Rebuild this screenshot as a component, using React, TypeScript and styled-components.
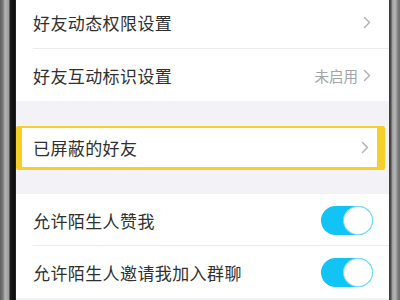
import * as React from 'react';
import styled, { createGlobalStyle } from 'styled-components';

const GlobalStyle = createGlobalStyle`
  html, body {
    margin: 0;
    padding: 0;
    width: 400px;
    height: 300px;
    overflow: hidden;
    background: #fff;
  }
`;

const Phone = styled.div`
  display: flex;
  width: 400px;
  height: 300px;
  overflow: hidden;
`;

const LeftBezel = styled.div`
  flex: 0 0 16px;
  background: linear-gradient(
    to right,
    #5e5e5e 0,
    #7a7a7a 3px,
    #b4b4b4 5px,
    #9a9a9a 9px,
    #1a1a1a 10px,
    #0c0c0c 15px,
    #3a3a3a 16px
  );
`;

const RightBezel = styled.div`
  flex: 0 0 11px;
  background: linear-gradient(
    to right,
    #3c3c3c 0,
    #4a4a4a 2px,
    #9c9c9c 3px,
    #b8b8b8 6px,
    #7d7d7d 9px,
    #6a6a6a 11px
  );
`;

const Screen = styled.div`
  flex: 1;
  display: flex;
  flex-direction: column;
  background: #f3f3f7;
  font-family: 'Noto Sans CJK SC', 'Noto Sans', sans-serif;
  color: #333;
`;

const Group = styled.div<{ $gap?: number }>`
  display: flex;
  flex-direction: column;
  background: #fff;
  margin-top: ${(p) => p.$gap ?? 0}px;
`;

const Row = styled.div<{ $h?: number; $divider?: boolean; $lift?: number }>`
  display: flex;
  align-items: center;
  height: ${(p) => p.$h ?? 52}px;
  padding: 0 16px ${(p) => p.$lift ?? 0}px 17px;
  box-sizing: border-box;
  position: relative;
  ${(p) =>
    p.$divider &&
    `
    &::after {
      content: '';
      position: absolute;
      left: 17px;
      right: 0;
      bottom: 0;
      height: 1px;
      background: #ececf0;
    }
  `}
`;

const Highlight = styled.div`
  display: flex;
  align-items: center;
  height: 39px;
  margin: 25px 4px 0 0;
  padding: 0 6px 0 11px;
  background: #fff;
  border-style: solid;
  border-color: #f7cf2a;
  border-width: 2px 8px 3px 6px;
  border-radius: 2px;
`;

const Label = styled.span`
  flex: 1;
  font-size: 17px;
  line-height: 1;
  letter-spacing: 0.4px;
  color: #303030;
`;

const Value = styled.span`
  font-size: 14.5px;
  color: #a3a3a8;
  margin-right: 5px;
`;

const Track = styled.div`
  width: 52px;
  height: 29px;
  border-radius: 15px;
  background: #12c3f5;
  display: flex;
  justify-content: flex-end;
  align-items: center;
  box-sizing: border-box;
`;

const Knob = styled.div`
  width: 30px;
  height: 29px;
  border-radius: 50%;
  background: #fff;
  box-sizing: border-box;
  border: 1.5px solid #7fdcf7;
`;

const Chevron = () => (
  <svg width="8" height="13" viewBox="0 0 8 13" style={{ marginRight: 2 }}>
    <polyline
      points="1.5,1.5 6.5,6.5 1.5,11.5"
      fill="none"
      stroke="#b4b4b8"
      strokeWidth="1.5"
      strokeLinecap="round"
      strokeLinejoin="round"
    />
  </svg>
);

const Toggle = () => (
  <Track>
    <Knob />
  </Track>
);

export default function App() {
  return (
    <Phone>
      <GlobalStyle />
      <LeftBezel />
      <Screen>
        <Group>
          <Row $h={49} $lift={4} $divider>
            <Label>好友动态权限设置</Label>
            <Chevron />
          </Row>
          <Row>
            <Label>好友互动标识设置</Label>
            <Value>未启用</Value>
            <Chevron />
          </Row>
        </Group>
        <Highlight>
          <Label>已屏蔽的好友</Label>
          <Chevron />
        </Highlight>
        <Group $gap={24}>
          <Row $divider>
            <Label>允许陌生人赞我</Label>
            <Toggle />
          </Row>
          <Row>
            <Label>允许陌生人邀请我加入群聊</Label>
            <Toggle />
          </Row>
        </Group>
      </Screen>
      <RightBezel />
    </Phone>
  );
}
